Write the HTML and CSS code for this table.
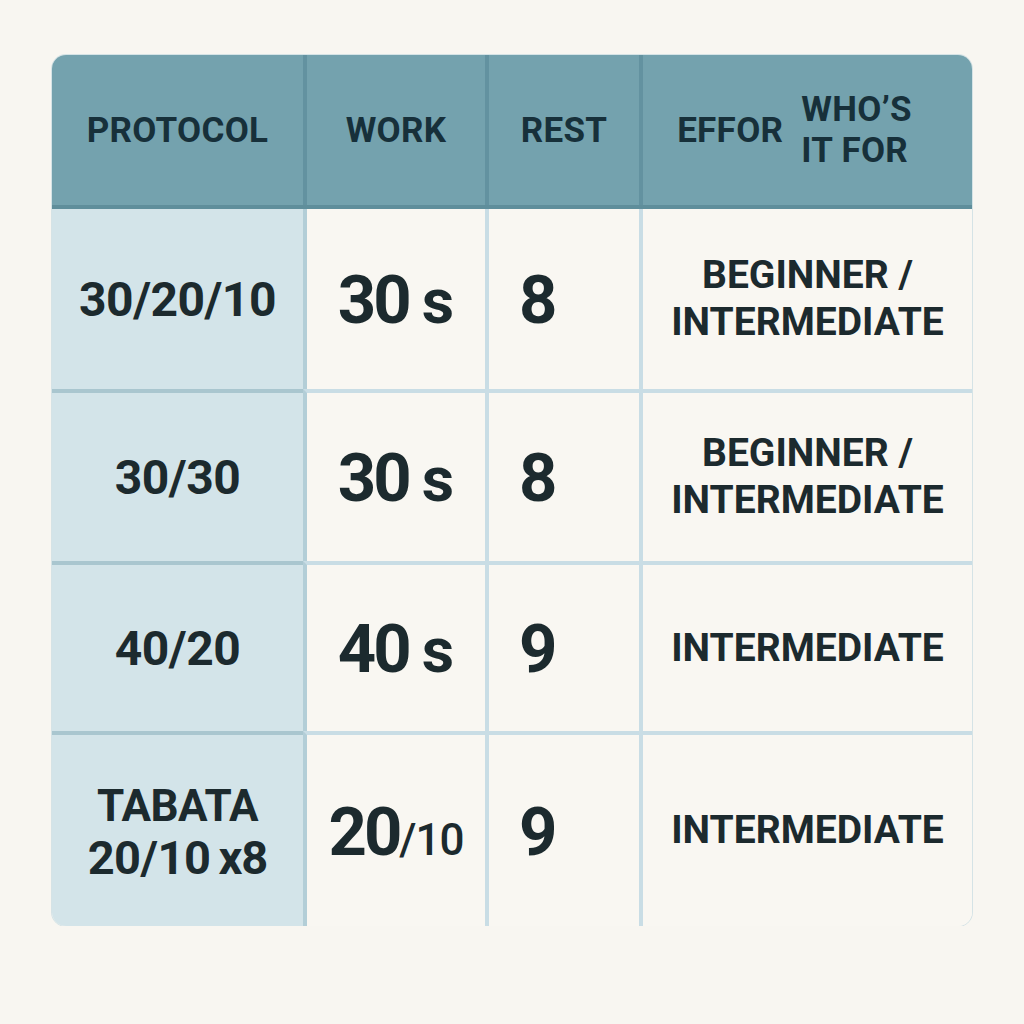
FILE: index.html
```html
<!DOCTYPE html>
<html lang="en">
<head>
<meta charset="utf-8">
<title>Interval Protocols</title>
<link rel="stylesheet" href="styles.css">
</head>
<body>
<div class="table">
  <div class="head">
    <div class="hcell">PROTOCOL</div>
    <div class="hcell sep">WORK</div>
    <div class="hcell sep">REST</div>
    <div class="hcell sep last">
      <span>EFFOR</span>
      <span class="two">WHO’S<br>IT FOR</span>
    </div>
  </div>
  <div class="row r1">
    <div class="cell proto"><p>30/20/10</p></div>
    <div class="cell work"><p>30<span class="unit">s</span></p></div>
    <div class="cell rest"><p>8</p></div>
    <div class="cell who"><p>BEGINNER /<br>INTERMEDIATE</p></div>
  </div>
  <div class="row r2">
    <div class="cell proto"><p>30/30</p></div>
    <div class="cell work"><p>30<span class="unit">s</span></p></div>
    <div class="cell rest"><p>8</p></div>
    <div class="cell who"><p>BEGINNER /<br>INTERMEDIATE</p></div>
  </div>
  <div class="row r3">
    <div class="cell proto"><p>40/20</p></div>
    <div class="cell work"><p>40<span class="unit">s</span></p></div>
    <div class="cell rest"><p>9</p></div>
    <div class="cell who"><p>INTERMEDIATE</p></div>
  </div>
  <div class="row r4">
    <div class="cell proto small"><p>TABATA<br><span class="l2">20/10<span class="x8">x8</span></span></p></div>
    <div class="cell work"><p>20<span class="frac">/10</span></p></div>
    <div class="cell rest"><p>9</p></div>
    <div class="cell who"><p>INTERMEDIATE</p></div>
  </div>
</div>
</body>
</html>
```

FILE: styles.css
```css
html, body {
  margin: 0;
  padding: 0;
  background: #f8f6f1;
}
body {
  font-family: Roboto, "Liberation Sans", Arial, sans-serif;
  color: #1c2a2e;
  padding: 55px 0 0 52px;
}
p {
  margin: 0;
}
.table {
  width: 920px;
  border-radius: 14px;
  overflow: hidden;
  box-shadow: 0 0 0 1px #d5e3e6;
  background: #f9f7f2;
}
.head,
.row {
  display: grid;
  grid-template-columns: 251px 182px 154px 333px;
}
.head {
  height: 150px;
  background: #74a2ae;
  border-bottom: 4px solid #5f8e9b;
}
.hcell {
  display: flex;
  align-items: center;
  justify-content: center;
  font-size: 35px;
  font-weight: 700;
  letter-spacing: 0.3px;
  color: #17303a;
}
.hcell.sep {
  border-left: 4px solid #6392a0;
}
.hcell.last {
  gap: 18px;
  padding-right: 26px;
}
.hcell .two {
  line-height: 41px;
}
.r1 { height: 180px; }
.r2 { height: 172px; }
.r3 { height: 170px; }
.r4 { height: 195px; }
.row + .row .cell {
  border-top: 4px solid #c9dde5;
}
.row + .row .cell.proto {
  border-top-color: #a9c6cf;
}
.cell {
  display: flex;
  align-items: center;
  justify-content: center;
  font-weight: 700;
  background: #f9f7f2;
}
.cell + .cell {
  border-left: 4px solid #c9dde5;
}
.cell.work {
  border-left-color: #b3ced7;
}
.proto {
  background: #d3e4e9;
  font-size: 48px;
  letter-spacing: -0.5px;
  text-align: center;
}
.proto.small {
  font-size: 44px;
  line-height: 51px;
  padding-top: 4px;
}
.l2 {
  font-size: 47px;
}
.x8 {
  margin-left: 8px;
  letter-spacing: -1px;
}
.work {
  font-size: 67px;
  letter-spacing: -3px;
  padding-top: 2px;
}
.unit {
  margin-left: 13px;
  font-size: 63px;
  letter-spacing: 0;
}
.frac {
  font-size: 44px;
  font-weight: 500;
  letter-spacing: -1px;
}
.rest {
  justify-content: flex-start;
  padding-left: 30px;
  font-size: 67px;
  padding-top: 2px;
}
.who {
  font-size: 39px;
  line-height: 47px;
  text-align: center;
}
```
